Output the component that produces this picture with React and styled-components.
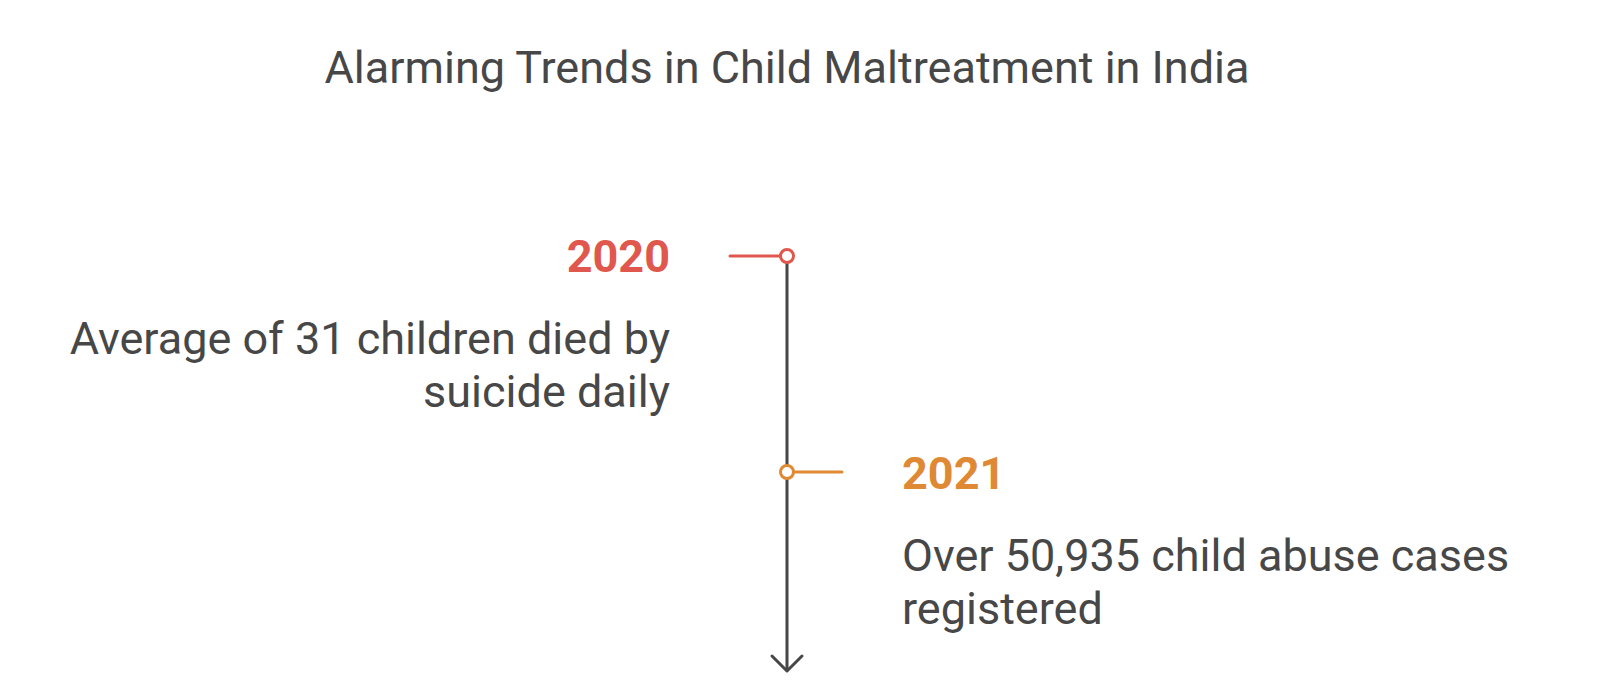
import React from 'react'
import styled, { createGlobalStyle } from 'styled-components'

const GlobalStyle = createGlobalStyle`
    html, body {
        margin: 0;
        padding: 0;
        background: #ffffff;
    }
    body {
        font-family: Roboto, "Liberation Sans", sans-serif;
        color: #474747;
    }
`

const RED = '#e0584d'
const ORANGE = '#df8935'
const INK = '#474747'

const events = [
    {
        year: '2020',
        color: RED,
        side: 'left',
        text: ['Average of 31 children died by', 'suicide daily'],
    },
    {
        year: '2021',
        color: ORANGE,
        side: 'right',
        text: ['Over 50,935 child abuse cases', 'registered'],
    },
]

const Page = styled.main`
    width: 1600px;
    height: 693px;
    padding-top: 41px;
    box-sizing: border-box;
    overflow: hidden;
`

const Title = styled.h1`
    margin: 0 26px 0 0;
    font-size: 45px;
    line-height: 53px;
    font-weight: 400;
    text-align: center;
    color: ${INK};
`

const Timeline = styled.section`
    display: grid;
    grid-template-columns: 670px 232px 1fr;
    grid-template-rows: 217px auto;
    margin-top: 136px;
`

const Axis = styled.svg`
    grid-column: 2;
    grid-row: 1 / span 2;
    display: block;
`

// events on the left of the axis hug it, so they align right
const Event = styled.div`
    grid-column: ${(p) => (p.side === 'left' ? 1 : 3)};
    grid-row: ${(p) => p.row};
    display: flex;
    flex-direction: column;
    align-items: ${(p) => (p.side === 'left' ? 'flex-end' : 'flex-start')};
    text-align: ${(p) => (p.side === 'left' ? 'right' : 'left')};
`

const Year = styled.div`
    font-size: 45px;
    line-height: 53px;
    font-weight: 700;
    color: ${(p) => p.color};
`

const Description = styled.p`
    margin: 29px 0 0;
    font-size: 45px;
    line-height: 53px;
    color: ${INK};
    white-space: nowrap;
`

function TimelineAxis() {
    // axis sits 117px into the middle column
    const x = 117
    return (
        <Axis width="232" height="452" viewBox="0 0 232 452">
            <line x1={x} y1="32" x2={x} y2="441" stroke={INK} strokeWidth="3" />
            <polyline
                points={`${x - 15},426 ${x},441 ${x + 15},426`}
                fill="none"
                stroke={INK}
                strokeWidth="3"
                strokeLinecap="round"
                strokeLinejoin="round"
            />
            <line x1="60" y1="26" x2={x - 6} y2="26" stroke={RED} strokeWidth="3" strokeLinecap="round" />
            <circle cx={x} cy="26" r="6.5" fill="#fff" stroke={RED} strokeWidth="3" />
            <line x1={x + 6} y1="242" x2="172" y2="242" stroke={ORANGE} strokeWidth="3" strokeLinecap="round" />
            <circle cx={x} cy="242" r="6.5" fill="#fff" stroke={ORANGE} strokeWidth="3" />
        </Axis>
    )
}

export default function App() {
    return (
        <Page>
            <GlobalStyle />
            <Title>Alarming Trends in Child Maltreatment in India</Title>
            <Timeline>
                {events.map((ev, i) => (
                    <Event key={ev.year} side={ev.side} row={i + 1}>
                        <Year color={ev.color}>{ev.year}</Year>
                        <Description>
                            {ev.text[0]}
                            <br />
                            {ev.text[1]}
                        </Description>
                    </Event>
                ))}
                <TimelineAxis />
            </Timeline>
        </Page>
    )
}
